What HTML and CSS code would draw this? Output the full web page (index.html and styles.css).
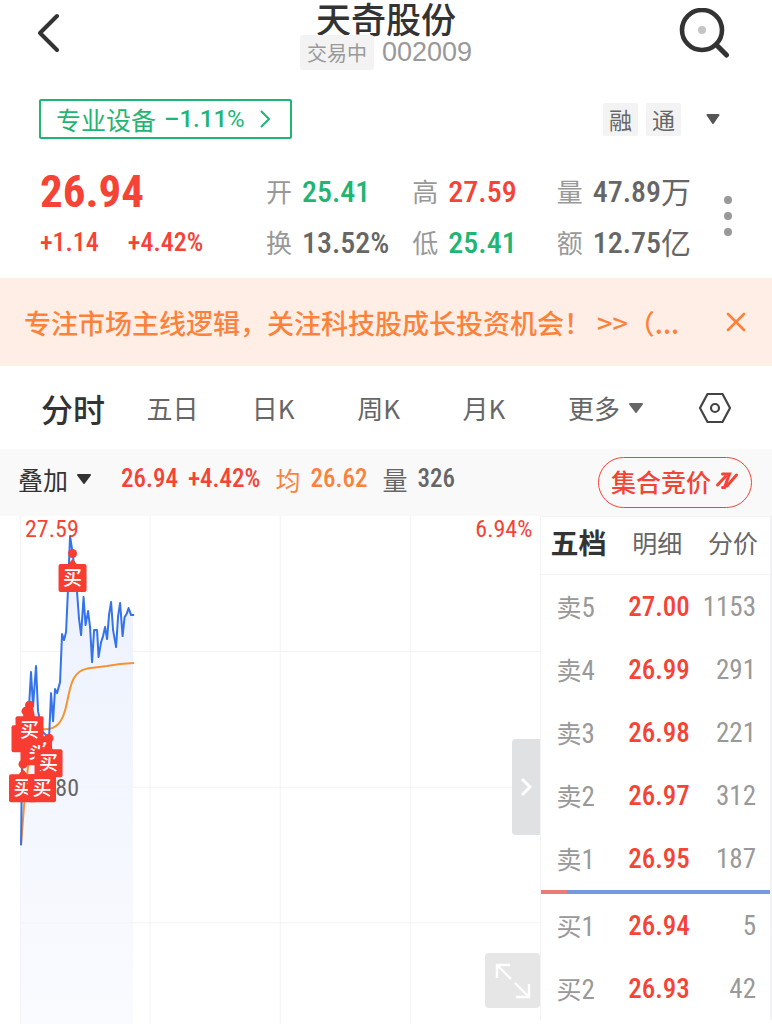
FILE: index.html
```html
<!DOCTYPE html>
<html lang="zh-CN">
<head>
    <meta charset="UTF-8">
    <meta name="viewport" content="width=device-width, initial-scale=1.0">
    <title>天奇股份 002009</title>
    <link rel="stylesheet" href="styles.css">
</head>
<body>
    <header class="header">
        <button class="icon-btn" aria-label="返回">
            <svg width="26" height="42" viewBox="0 0 26 42"><path d="M19 4 L2 21 L19 38" fill="none" stroke="#333" stroke-width="4" stroke-linecap="round" stroke-linejoin="round"/></svg>
        </button>
        <div class="header-title">
            <h1>天奇股份</h1>
            <div class="header-sub">
                <span class="status">交易中</span>
                <span class="code">002009</span>
            </div>
        </div>
        <button class="icon-btn" aria-label="搜索">
            <svg width="52" height="52" viewBox="0 0 52 52">
                <circle cx="24" cy="22" r="20" fill="none" stroke="#333" stroke-width="4.6"/>
                <path d="M38.500 37 L48.500 47" stroke="#333" stroke-width="5" stroke-linecap="round"/>
                <circle cx="24" cy="22" r="4" fill="#c4c4c4"/>
            </svg>
        </button>
    </header>

    <div class="sector-row">
        <a class="sector" href="#">
            <span>专业设备</span>
            <span class="sector-change"><b>–1.11</b>%</span>
            <svg width="12" height="20" viewBox="0 0 12 20"><path d="M2 2 L10 10 L2 18" fill="none" stroke="#1fb573" stroke-width="2"/></svg>
        </a>
        <div class="tags">
            <span class="tag">融</span>
            <span class="tag">通</span>
            <button class="icon-btn tags-more" aria-label="展开">
                <svg width="14" height="10" viewBox="0 0 14 10"><path d="M1.500 1 H12.500 L7 9 Z" fill="#555" stroke="#555" stroke-width="2" stroke-linejoin="round"/></svg>
            </button>
        </div>
    </div>

    <section class="quote">
        <div class="quote-main red">
            <div class="price">26.94</div>
            <div class="change"><span>+1.14</span><span>+4.42%</span></div>
        </div>
        <dl class="stats">
            <div><dt>开</dt><dd class="green">25.41</dd></div>
            <div><dt>高</dt><dd class="red">27.59</dd></div>
            <div><dt>量</dt><dd>47.89<span class="unit">万</span></dd></div>
            <div><dt>换</dt><dd>13.52%</dd></div>
            <div><dt>低</dt><dd class="green">25.41</dd></div>
            <div><dt>额</dt><dd>12.75<span class="unit">亿</span></dd></div>
        </dl>
        <button class="icon-btn" aria-label="更多">
            <svg width="10" height="42" viewBox="0 0 10 42" fill="#999"><circle cx="5" cy="5" r="4"/><circle cx="5" cy="21" r="4"/><circle cx="5" cy="37" r="4"/></svg>
        </button>
    </section>

    <div class="notice">
        <a href="#">专注市场主线逻辑，关注科技股成长投资机会！ &gt;&gt;（...</a>
        <button class="icon-btn" aria-label="关闭">
            <svg width="20" height="20" viewBox="0 0 20 20"><path d="M2 2 L18 18 M18 2 L2 18" stroke="#fc823c" stroke-width="2.600" stroke-linecap="round"/></svg>
        </button>
    </div>

    <nav class="tabs">
        <button class="active">分时</button>
        <button>五日</button>
        <button>日K</button>
        <button>周K</button>
        <button>月K</button>
        <button>更多 <svg width="16" height="12" viewBox="0 0 16 12"><path d="M2 2 H14 L8 10 Z" fill="#666" stroke="#666" stroke-width="2" stroke-linejoin="round"/></svg></button>
        <button aria-label="设置">
            <svg width="34" height="32" viewBox="0 0 34 32" fill="none" stroke="#444" stroke-width="2.200" stroke-linejoin="round">
                <path d="M9.500 2 H24.500 L32 16 L24.500 30 H9.500 L2 16 Z"/>
                <circle cx="17" cy="16" r="4"/>
            </svg>
        </button>
    </nav>

    <div class="infobar">
        <button class="overlay">叠加 <svg width="16" height="12" viewBox="0 0 16 12"><path d="M2 2 H14 L8 10 Z" fill="#333" stroke="#333" stroke-width="2" stroke-linejoin="round"/></svg></button>
        <div class="info red"><span class="num">26.94</span><span class="num">+4.42%</span></div>
        <div class="info orange"><span>均</span><span class="num">26.62</span></div>
        <div class="info"><span>量</span><span class="num">326</span></div>
        <button class="auction">集合竞价
            <svg width="24" height="20" viewBox="0 0 24 20" fill="none" stroke="#f54336" stroke-width="3" stroke-linecap="round"><path d="M2.500 14 L10.500 5.500"/><path d="M7.500 3 H14.500 L9.500 16.500 H7.500"/><path d="M12 15 L21.500 4"/></svg>
        </button>
    </div>

    <main class="board">
        <section class="chart">
            <svg class="chart-svg" viewBox="0 0 540 508">
                <defs>
                    <linearGradient id="fill" x1="0" y1="0" x2="0" y2="1">
                        <stop offset="0" stop-color="#ecf1fd"/>
                        <stop offset="1" stop-color="#fafbff"/>
                    </linearGradient>
                    <g id="buy">
                        <path d="M-5 -13 L0 -19 L5 -13 Z" fill="#f83c31"/>
                        <rect x="-14" y="-14" width="28" height="28" rx="2" fill="#f83c31"/>
                        <text class="buy-text" x="0" y="7">买</text>
                    </g>
                </defs>
                <path class="area" d="M20 329 L22 250 L29 190 L31 156 L33 190 L36 150 L38 195 L42 215 L49 222 L51 177 L53 205 L55 173 L57 177 L60 166 L62 118 L64 124 L66 116 L68 72 L70 20 L73 40 L75 60 L77 76 L79 103 L81 119 L83.500 81 L85.500 109 L88 95 L90 111 L92 146 L94 114 L97 114 L98.500 141 L101 126 L103 120 L105 111 L107 123 L109 98 L111 86 L113 114 L116 131 L118 100 L120 87 L122.500 120 L124.500 101 L126.500 98 L128.500 92 L131 99 L133 99 V508 H20 Z"/>
                <path class="grid" d="M20.500 0 V508 M150 0 V508 M280 0 V508 M410 0 V508 M20 135.500 H540 M20 271 H540 M20 406.500 H540"/>
                <path class="line-avg" d="M21 329 L24 290 L28 250 Q34 216 43 213 C56 214 63 207 67 186 C71 165 74 155 87 152.500 L107 150 L120 148 L134 147"/>
                <path class="line-price" d="M21 329 L22 250 L29 190 L31 156 L33 190 L36 150 L38 195 L42 215 L49 222 L51 177 L53 205 L55 173 L57 177 L60 166 L62 118 L64 124 L66 116 L68 72 L70 20 L73 40 L75 60 L77 76 L79 103 L81 119 L83.500 81 L85.500 109 L88 95 L90 111 L92 146 L94 114 L97 114 L98.500 141 L101 126 L103 120 L105 111 L107 123 L109 98 L111 86 L113 114 L116 131 L118 100 L120 87 L122.500 120 L124.500 101 L126.500 98 L128.500 92 L131 99 L134 99"/>
                <text class="axis red" x="25" y="21">27.59</text>
                <text class="axis red" x="532" y="21" text-anchor="end">6.94%</text>
                <text class="axis" x="79" y="280" text-anchor="end">25.80</text>
                <path d="M21 206 L26 191 L33 191 L36 206 Z" fill="#f83c31"/>
                <g fill="#f83c31">
                    <circle cx="72.500" cy="37.500" r="4.500"/>
                    <circle cx="29.500" cy="189" r="4.500"/>
                    <circle cx="26" cy="195" r="4.500"/>
                    <circle cx="49" cy="222" r="4.500"/>
                    <circle cx="23" cy="248" r="4.500"/>
                </g>
                <rect x="11.500" y="209" width="28" height="27" rx="2" fill="#f83c31"/>
                <rect x="20.500" y="220" width="28" height="28" rx="2" fill="#f83c31"/>
                <use href="#buy" x="72.500" y="62"/>
                <use href="#buy" x="38" y="235"/>
                <use href="#buy" x="29.500" y="214"/>
                <use href="#buy" x="48.500" y="247"/>
                <use href="#buy" x="23" y="272"/>
                <use href="#buy" x="42" y="272"/>
            </svg>
            <button class="handle" aria-label="收起">
                <svg width="14" height="20" viewBox="0 0 14 20"><path d="M3 2 L11 10 L3 18" fill="none" stroke="#fff" stroke-width="3"/></svg>
            </button>
            <button class="expand" aria-label="全屏">
                <svg width="36" height="36" viewBox="0 0 36 36" fill="none" stroke="#fff" stroke-width="2.400"><path d="M2 15 V2 H15 M2 2 L16 16 M34 21 V34 H21 M34 34 L20 20"/></svg>
            </button>
        </section>

        <section class="orders">
            <div class="order-tabs">
                <button class="active">五档</button>
                <button>明细</button>
                <button>分价</button>
            </div>
            <table>
                <tr><th>卖<span>5</span></th><td class="red">27.00</td><td>1153</td></tr>
                <tr><th>卖<span>4</span></th><td class="red">26.99</td><td>291</td></tr>
                <tr><th>卖<span>3</span></th><td class="red">26.98</td><td>221</td></tr>
                <tr><th>卖<span>2</span></th><td class="red">26.97</td><td>312</td></tr>
                <tr><th>卖<span>1</span></th><td class="red">26.95</td><td>187</td></tr>
            </table>
            <div class="ratio"><div class="ratio-buy" style="width: 11%"></div></div>
            <table>
                <tr><th>买<span>1</span></th><td class="red">26.94</td><td>5</td></tr>
                <tr><th>买<span>2</span></th><td class="red">26.93</td><td>42</td></tr>
            </table>
        </section>
    </main>
</body>
</html>
```
FILE: styles.css
```css
* {
    margin: 0;
    padding: 0;
    box-sizing: border-box;
}

body {
    background-color: #fff;
    color: #666;
    font-family: "Noto Sans CJK SC", sans-serif;
    font-size: 26px;
}

button {
    background: none;
    border: none;
    color: inherit;
    font: inherit;
    text-align: left;
    cursor: pointer;
}

a {
    color: inherit;
    text-decoration: none;
}

svg {
    display: block;
}

.red {
    color: #f54336;
}

.green {
    color: #1fb573;
}

.orange {
    color: #fc823c;
}

.num,
.price,
.change,
.stats dd,
.axis,
.orders td,
.orders th span {
    font-family: "Roboto Condensed", Roboto, sans-serif;
}

/* header */
.header {
    display: flex;
    justify-content: space-between;
    align-items: flex-start;
    height: 80px;
    padding: 0 38px;
}

.header .icon-btn {
    width: 56px;
    padding-top: 8px;
}

.header .icon-btn:first-child {
    padding-top: 12px;
}

.header-title {
    text-align: center;
}

.header h1 {
    color: #333;
    font-size: 35px;
    font-weight: 500;
    line-height: 35px;
}

.header-sub {
    display: flex;
    align-items: center;
    gap: 8px;
    color: #999;
}

.status {
    padding: 0 7px;
    border-radius: 3px;
    background-color: #f3f3f3;
    font-size: 20px;
    line-height: 35px;
}

.code {
    font-family: "Liberation Sans", sans-serif;
    font-size: 27px;
    line-height: 35px;
}

/* sector and tags */
.sector-row {
    display: flex;
    justify-content: space-between;
    align-items: center;
    height: 78px;
    padding: 0 52px 0 39px;
}

.sector {
    display: flex;
    align-items: center;
    gap: 8px;
    height: 40px;
    padding: 0 19px 0 15px;
    border: 2px solid #1fb573;
    border-radius: 2px;
    color: #1fb573;
    font-size: 25px;
    line-height: 36px;
}

.sector-change {
    font-family: Roboto, sans-serif;
    font-size: 24px;
}

.sector b {
    font-weight: 500;
}

.sector svg {
    margin-left: 6px;
}

.tags {
    display: flex;
    align-items: center;
    gap: 8px;
}

.tag {
    width: 35px;
    border-radius: 2px;
    background-color: #f3f3f3;
    font-size: 23px;
    line-height: 33px;
    text-align: center;
}

.tags-more {
    padding-left: 17px;
}

/* quote */
.quote {
    display: flex;
    align-items: center;
    height: 120px;
    padding: 0 39px 4px 40px;
}

.quote-main {
    width: 226px;
}

.price {
    font-size: 45px;
    font-weight: 700;
    line-height: 52px;
}

.change {
    display: flex;
    gap: 29px;
    font-size: 26px;
    font-weight: 500;
    line-height: 48px;
}

.stats {
    flex: 1;
    display: grid;
    grid-template-columns: 146fr 144fr 166fr;
    line-height: 51px;
}

.stats div {
    display: flex;
    align-items: center;
    gap: 10px;
    height: 51px;
    white-space: nowrap;
}

.stats dt {
    color: #999;
    font-size: 26px;
}

.stats dd {
    display: flex;
    align-items: center;
    padding-top: 2px;
    font-size: 30px;
    font-weight: 500;
}

.unit {
    padding-bottom: 2px;
    font-family: "Noto Sans CJK SC", sans-serif;
    font-size: 30px;
    font-weight: 400;
}

/* notice */
.notice {
    display: flex;
    justify-content: space-between;
    align-items: center;
    height: 88px;
    padding: 0 26px 0 24px;
    background-color: #ffeee6;
    color: #fc823c;
    font-size: 27px;
    font-weight: 500;
    white-space: nowrap;
}

/* period tabs */
.tabs {
    display: grid;
    grid-template-columns: repeat(5, 1fr) 130px 34px;
    align-items: center;
    height: 83px;
    padding: 0 40px 0 41px;
}

.tabs button,
.overlay,
.auction {
    display: flex;
    align-items: center;
    gap: 8px;
    white-space: nowrap;
}

.tabs .active {
    color: #333;
    font-size: 32px;
    font-weight: 500;
}

/* info bar */
.infobar {
    display: flex;
    align-items: center;
    height: 67px;
    padding: 0 20px 0 18px;
    background-color: #f9f9f9;
    font-size: 25px;
    line-height: 40px;
}

.overlay {
    margin-right: 29px;
    padding-bottom: 8px;
    color: #333;
}

.info {
    display: flex;
    align-items: center;
    gap: 10px;
    margin-right: 15px;
    padding-bottom: 8px;
}

.info .num {
    font-size: 25px;
    font-weight: 500;
}

.auction {
    gap: 4px;
    height: 51px;
    margin-left: auto;
    padding: 0 12px 3px;
    border: 1px solid #f54336;
    border-radius: 26px;
    color: #f54336;
    font-weight: 500;
}

/* chart and order book */
.board {
    display: flex;
    align-items: flex-start;
}

.chart {
    position: relative;
    width: 70%;
}

.chart-svg {
    width: 100%;
    height: auto;
}

.area {
    fill: url(#fill);
}

.grid {
    fill: none;
    stroke: #f3f3f5;
    stroke-width: 1;
}

.line-price,
.line-avg {
    fill: none;
    stroke: #3573ea;
    stroke-width: 2;
    stroke-linejoin: round;
}

.line-avg {
    stroke: #f7932f;
}

.axis {
    fill: currentColor;
    font-size: 24px;
    font-weight: 400;
}

.buy-text {
    fill: #fff;
    font-size: 19px;
    font-weight: 500;
    text-anchor: middle;
}

.handle,
.expand {
    position: absolute;
    right: 0;
    display: flex;
    align-items: center;
    justify-content: center;
}

.handle {
    top: 223px;
    width: 28px;
    height: 96px;
    border-radius: 4px 0 0 4px;
    background-color: #e0e1e3;
}

.expand {
    bottom: 16px;
    width: 55px;
    height: 55px;
    border-radius: 4px;
    background-color: #e6e6e6;
}

.orders {
    width: 30%;
    border: solid #f3f3f5;
    border-width: 1px 2px 0 1px;
}

.order-tabs {
    display: flex;
    justify-content: space-between;
    align-items: center;
    height: 58px;
    padding: 0 12px 8px 9px;
    border-bottom: 1px solid #f3f3f5;
    font-size: 25px;
}

.order-tabs .active {
    color: #333;
    font-size: 28px;
    font-weight: 700;
}

.orders table {
    width: 100%;
    border-collapse: collapse;
    table-layout: fixed;
}

.orders tr {
    height: 63px;
    line-height: 40px;
}

.orders th {
    width: 38%;
    padding-left: 15px;
    color: #999;
    font-size: 25px;
    font-weight: 400;
    text-align: left;
}

.orders th span,
.orders td {
    font-size: 27px;
    font-weight: 400;
}

.orders .red {
    font-weight: 500;
}

.orders td:last-child {
    padding-right: 14px;
    color: #999;
    text-align: right;
}

.ratio {
    height: 4px;
    background-color: #7499df;
}

.ratio-buy {
    height: 100%;
    background-color: #e97c78;
}
```
